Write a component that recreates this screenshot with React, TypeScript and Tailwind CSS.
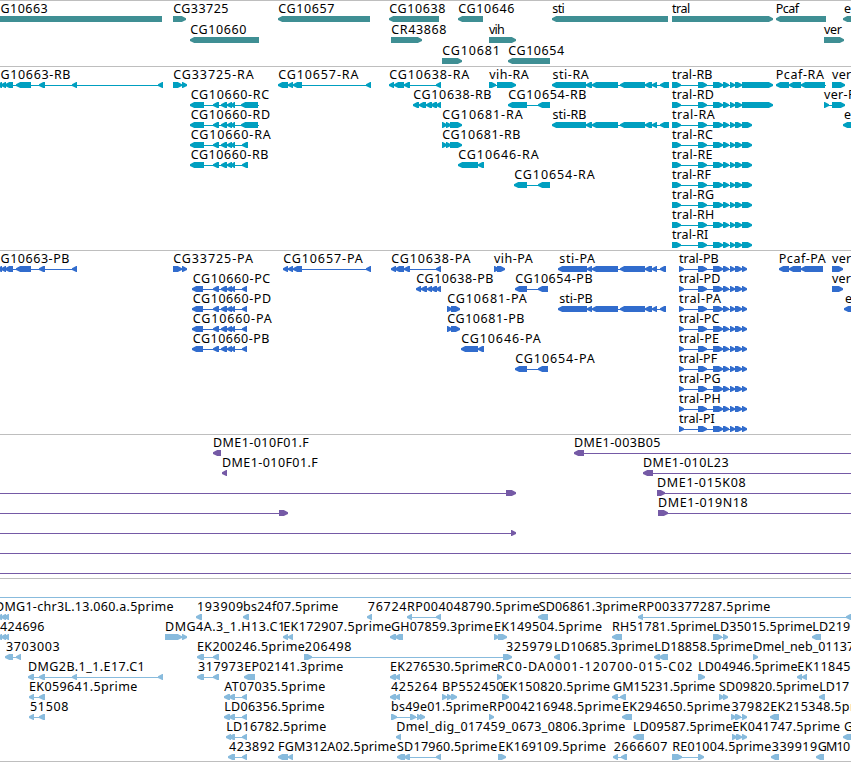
type Span = [number, number];
type Feature = {
  dir: 'L' | 'R';
  exons: Span[];
  line?: Span;
  label?: string;
  ink?: Span;
};
type TrackData = { color: string; rowClass: string; padClass: string; rows: Feature[][] };

const f = (
  dir: 'L' | 'R',
  label: string,
  inkStart: number,
  inkEnd: number,
  exons: Span[],
  line?: Span,
): Feature => ({ dir, label, ink: [inkStart, inkEnd], exons, line });

const bare = (dir: 'L' | 'R', exons: Span[], line: Span): Feature => ({ dir, exons, line });

const FONT = '12.5px "Noto Sans", "DejaVu Sans", sans-serif';
const measurer = document.createElement('canvas').getContext('2d')!;

function fitLabel(text: string, [start, end]: Span) {
  measurer.font = FONT;
  const m = measurer.measureText(text);
  const bearing = -m.actualBoundingBoxLeft;
  const inkWidth = m.actualBoundingBoxRight + m.actualBoundingBoxLeft;
  const gaps = text.length - 1;
  return {
    left: start - bearing,
    letterSpacing: gaps > 0 ? (end - start - inkWidth) / gaps : 0,
  };
}

const g663: Span[] = [[-3, 2], [1, 6], [5, 13], [16, 31], [39, 45], [72, 77]];
const g660: Span[] = [[213, 219], [221, 227], [227, 232], [231, 235]];
const stiR: Span[] = [[552, 586], [586, 592], [592, 618], [620, 645], [645, 652], [652, 657], [660, 669]];
const stiP: Span[] = [[558, 587], [587, 592], [592, 618], [620, 645], [645, 652], [652, 657], [660, 666]];
const tralMid: Span[] = [[698, 707], [713, 723], [723, 729], [730, 735], [735, 742]];
const tralR = (s: string, end: number, long = false) =>
  f('R', `tral-R${s}`, 672, end, [[672, 681], ...tralMid, [742, long ? 773 : 752]]);
const tralP = (s: string, end: number) =>
  f('R', `tral-P${s}`, 679, end, [[679, 684], ...tralMid, [742, 747]]);
const rna660 = (s: string, end: number, long: boolean) =>
  f('L', `CG10660-R${s}`, 190.7, end, [[190, 204], ...g660, long ? [241, 258] : [242, 248]], [190, long ? 259 : 248]);
const cds660 = (s: string, end: number) =>
  f('L', `CG10660-P${s}`, 192.8, end, [[192, 203], ...g660, [242, 247]]);

const genes: TrackData = {
  color: '#3f8f94',
  rowClass: 'h-[21px]',
  padClass: 'pb-[3px]',
  rows: [
    [
      f('L', 'G10663', 0.5, 47.5, [[-8, 162]]),
      f('R', 'CG33725', 173.2, 228.3, [[173, 186]]),
      f('L', 'CG10657', 278.2, 334.3, [[278, 370]]),
      f('L', 'CG10638', 389.3, 445.3, [[389, 439]]),
      f('L', 'CG10646', 458.3, 514.3, [[458, 483]]),
      f('L', 'sti', 552.3, 564.5, [[552, 668]]),
      f('R', 'tral', 672, 690, [[672, 773]]),
      f('L', 'Pcaf', 776.7, 799.7, [[776, 826]]),
      f('L', 'e', 844, 850, [[843, 860]]),
    ],
    [
      f('L', 'CG10660', 190.2, 246.3, [[190, 259]]),
      f('R', 'CR43868', 391.3, 446.3, [[391, 422]]),
      f('R', 'vih', 489, 504, [[489, 516]]),
      f('R', 'ver', 824, 841.7, [[824, 844]]),
    ],
    [
      f('R', 'CG10681', 442.3, 497.7, [[442, 462]]),
      f('L', 'CG10654', 508.3, 564, [[508, 550]]),
    ],
  ],
};

const transcripts: TrackData = {
  color: '#009fc0',
  rowClass: 'h-5',
  padClass: 'pb-1',
  rows: [
    [
      f('L', 'G10663-RB', 0.5, 70.3, [...g663, [158, 163]]),
      f('R', 'CG33725-RA', 173.2, 253.8, [[173, 182], [182, 187]]),
      f('L', 'CG10657-RA', 278.2, 358.5, [[278, 288], [288, 293], [293, 302], [366, 371]]),
      f('L', 'CG10638-RA', 389.3, 469.3, [[389, 394], [394, 404], [404, 410], [436, 441]]),
      f('R', 'vih-RA', 489.2, 528.7, [[489, 496], [497, 516]]),
      f('L', 'sti-RA', 552.5, 588.7, stiR),
      tralR('B', 712.3, true),
      f('L', 'Pcaf-RA', 776.7, 824, [[776, 789], [789, 801], [801, 825]], [776, 826]),
      f('R', 'ver-RA', 832, 872, [[832, 845]]),
    ],
    [
      rna660('C', 269.3, true),
      f('L', 'CG10638-RB', 413.3, 491.3, [[413, 419], [419, 426], [426, 432], [431, 437], [436, 441]]),
      f('L', 'CG10654-RB', 508.3, 586.3, [[508, 527], [538, 550]]),
      tralR('D', 713.8, true),
      f('R', 'ver-RB', 824, 864, [[824, 829], [832, 845]]),
    ],
    [
      rna660('D', 270, true),
      f('R', 'CG10681-RA', 442.3, 522.7, [[442, 447], [446, 451], [450, 462]]),
      f('L', 'sti-RB', 552.5, 586.3, stiR),
      tralR('A', 714.7),
      f('L', 'e', 844, 850, [[843, 860]]),
    ],
    [
      rna660('A', 270.8, false),
      f('R', 'CG10681-RB', 442.3, 520.3, [[442, 447], [446, 451], [450, 462]]),
      tralR('C', 713),
    ],
    [
      rna660('B', 268.3, false),
      f('L', 'CG10646-RA', 458.3, 538.7, [[458, 478], [478, 484]]),
      tralR('E', 712.5),
    ],
    [f('L', 'CG10654-RA', 514.3, 594.8, [[514, 527], [538, 550]]), tralR('F', 711.5)],
    [tralR('G', 714)],
    [tralR('H', 714)],
    [tralR('I', 708)],
  ],
};

const proteins: TrackData = {
  color: '#316ccd',
  rowClass: 'h-5',
  padClass: 'pb-1',
  rows: [
    [
      f('L', 'G10663-PB', 0.5, 69.3, g663),
      f('R', 'CG33725-PA', 173.2, 253, [[173, 182], [182, 187]]),
      f('L', 'CG10657-PA', 283.3, 362.7, [[283, 288], [288, 293], [293, 302], [366, 371]]),
      f('L', 'CG10638-PA', 391.3, 470.5, [[391, 396], [395, 404], [404, 410], [436, 441]]),
      f('R', 'vih-PA', 494, 532.7, [[494, 499], [497, 505]]),
      f('L', 'sti-PA', 559.3, 595, stiP),
      tralP('B', 718.5),
      f('L', 'Pcaf-PA', 779.8, 825.7, [[779, 789], [789, 801], [801, 823]]),
      f('R', 'ver-PA', 832, 871, [[832, 843]]),
    ],
    [
      cds660('C', 270.3),
      f('L', 'CG10638-PB', 416.3, 493.3, [[416, 421], [421, 427], [427, 432], [431, 437], [436, 441]]),
      f('L', 'CG10654-PB', 515.3, 592.5, [[515, 527], [538, 548]]),
      tralP('D', 720.3),
      f('R', 'ver-PB', 832, 871, [[832, 843]]),
    ],
    [
      cds660('D', 271),
      f('R', 'CG10681-PA', 447.3, 526.7, [[447, 452], [451, 460]]),
      f('L', 'sti-PB', 559.3, 592.5, stiP),
      tralP('A', 721),
      f('L', 'e', 845, 851, [[844, 860]]),
    ],
    [
      cds660('A', 271.7),
      f('R', 'CG10681-PB', 447.3, 524.3, [[447, 452], [451, 460]]),
      tralP('C', 719.5),
    ],
    [
      cds660('B', 269.3),
      f('L', 'CG10646-PA', 461.3, 540.7, [[461, 478], [478, 484]]),
      tralP('E', 719),
    ],
    [f('L', 'CG10654-PA', 515.3, 594.8, [[515, 527], [538, 548]]), tralP('F', 717.7)],
    [tralP('G', 720.5)],
    [tralP('H', 720.5)],
    [tralP('I', 714.5)],
  ],
};

const bacs: TrackData = {
  color: '#755aa6',
  rowClass: 'h-5',
  padClass: 'pb-1',
  rows: [
    [
      f('L', 'DME1-010F01.F', 214, 309.3, [[213, 221]]),
      f('L', 'DME1-003B05', 575, 660.3, [[574, 584]], [574, 851]),
    ],
    [
      f('L', 'DME1-010F01.F', 223, 318.3, [[222, 227]]),
      f('L', 'DME1-010L23', 644, 728.5, [[643, 653]], [643, 851]),
    ],
    [
      bare('R', [[506, 516]], [0, 516]),
      f('R', 'DME1-015K08', 658, 745.5, [[657, 665]], [657, 851]),
    ],
    [
      bare('R', [[279, 288]], [0, 288]),
      f('R', 'DME1-019N18', 659, 747.5, [[658, 668]], [658, 851]),
    ],
    [bare('R', [[511, 516]], [0, 516])],
    [bare('R', [], [0, 851])],
    [bare('R', [], [0, 851])],
  ],
};

const trio: Span[] = [[-3, 2], [1, 6], [4, 9]];
const ests: TrackData = {
  color: '#88bbdd',
  rowClass: 'h-5',
  padClass: 'pb-[3px]',
  rows: [
    [bare('R', [], [0, 851])],
    [
      f('L', 'DMG1-chr3L.13.060.a.5prime', -4, 173.5, trio),
      f('L', '193909', 198, 243, [[196, 202]]),
      f('L', 'bs24f07.5prime', 244, 338.3, [[243, 249]]),
      f('L', '76724', 367.8, 406.3, [[367, 372]]),
      f('L', 'RP004048790.5prime', 408, 539.5, [[407, 412], [436, 441]]),
      f('L', 'SD06861.3prime', 538.7, 638, [[538, 548]]),
      f('L', 'RP003377287.5prime', 639.3, 770.3, [[638, 643], [846, 853]]),
    ],
    [
      f('L', '424696', 0, 44.3, trio),
      f('R', 'DMG4A.3_1.H13.C1', 166, 283, [[165, 182], [182, 187]]),
      f('L', 'EK172907.5prime', 284.3, 391.3, [[283, 288], [288, 293]]),
      f('L', 'GH07859.3prime', 391, 493, [[390, 396], [395, 403]]),
      f('R', 'EK149504.5prime', 495, 602, [[494, 499], [498, 507]]),
      f('L', 'RH51781.5prime', 613, 713.8, [[612, 622]]),
      f('R', 'LD35015.5prime', 714.3, 812.5, [[713, 722], [723, 728]]),
      f('L', 'LD219', 813.3, 850, [[812, 821]]),
    ],
    [
      f('L', '3703003', 6, 59.5, [[5, 13], [16, 21]]),
      f('L', 'EK200246.5prime', 198, 304.7, [[197, 204], [213, 219]]),
      f('R', '206498', 304.8, 351.3, [[304, 312], [503, 512]]),
      f('L', '325979', 506, 552.3, []),
      f('L', 'LD10685.3prime', 555, 654, [[554, 560]]),
      f('L', 'LD18858.5prime', 655.3, 752.8, [[654, 660], [659, 668]]),
      f('R', 'Dmel_neb_01137', 754.3, 854, [[753, 758]]),
    ],
    [
      f('L', 'DMG2B.1_1.E17.C1', 29, 142.5, [[28, 34], [39, 45], [72, 77], [158, 163]]),
      f('L', '317973', 198, 243.5, [[197, 204], [213, 219]]),
      f('L', 'EP02141.3prime', 245.3, 343.3, [[244, 255]]),
      f('L', 'EK276530.5prime', 391, 498, [[390, 396], [395, 400]]),
      f('R', 'RC0-DA0001-120700-015-C02', 498, 692.3, [[497, 502]]),
      f('R', 'LD04946.5prime', 699, 797.5, [[698, 705]]),
      f('L', 'EK11845', 798.3, 850.3, [[797, 802], [802, 807]]),
    ],
    [
      f('L', 'EK059641.5prime', 30, 137.3, [[29, 34], [39, 45]]),
      f('L', 'AT07035.5prime', 224.3, 325.3, [[224, 230], [229, 235], [242, 247]]),
      f('L', '425264', 391, 437.3, [[390, 396], [395, 400]]),
      f('R', 'BP552450', 443, 503.3, [[442, 447], [447, 452], [451, 457]]),
      f('R', 'EK150820.5prime', 503.3, 610, [[502, 509]]),
      f('L', 'GM15231.5prime', 613, 715.3, [[612, 618], [620, 626]]),
      f('R', 'SD09820.5prime', 719, 819, [[719, 724], [723, 728]]),
      f('L', 'LD17', 820.3, 849, [[819, 825]]),
    ],
    [
      f('L', '51508', 30, 68.3, [[29, 34], [39, 45]]),
      f('L', 'LD06356.5prime', 225.3, 324.5, [[224, 230], [229, 235], [242, 247]]),
      f('R', 'bs49e01.5prime', 392, 488.7, [[391, 397], [410, 416], [417, 422], [420, 425]]),
      f('R', 'RP004216948.5prime', 490, 621, [[489, 494]]),
      f('L', 'EK294650.5prime', 623, 730.3, [[622, 632]]),
      f('R', '37982', 731.5, 769.7, [[731, 736], [735, 741], [742, 747]]),
      f('L', 'EK215348.5prime', 771.3, 878, [[770, 779]]),
    ],
    [
      f('L', 'LD16782.5prime', 227.3, 326.3, [[226, 231], [229, 235], [242, 247]]),
      f('L', 'Dmel_dig_017459_0673_0806.3prime', 397.3, 625.3, [[396, 401]]),
      f('L', 'LD09587.5prime', 634, 732.5, [[633, 644]]),
      f('R', 'EK041747.5prime', 733.3, 840, [[732, 737], [736, 742], [742, 747]]),
      f('L', 'G', 844, 852, [[843, 856]]),
    ],
    [
      f('L', '423892', 229, 274.5, [[228, 235], [242, 247]]),
      f('L', 'FGM312A02.5prime', 279, 396.3, [[278, 288], [288, 293]]),
      f('L', 'SD17960.5prime', 397, 497.3, [[397, 405], [404, 410], [436, 441]]),
      f('R', 'EK169109.5prime', 499.3, 606, [[498, 506]]),
      f('L', '2666607', 613.8, 667.3, [[613, 618], [621, 627]]),
      f('R', 'RE01004.5prime', 673.3, 771.3, [[672, 682], [698, 704]]),
      f('L', '339919', 771.8, 817, [[771, 779]]),
      f('L', 'GM10', 817.7, 850, [[816, 824]]),
    ],
  ],
};

const tracks = [genes, transcripts, proteins, bacs, ests];

/* A block arrow with a blunt tip; spans too short for a body are all head. */
function exonPoints([a, b]: Span, dir: 'L' | 'R') {
  const head = Math.min(5, b - a);
  return dir === 'L'
    ? `${a},20 ${a},18.2 ${a + head - 0.8},16 ${b},16 ${b},22 ${a + head - 0.8},22`
    : `${b},20 ${b},18.2 ${b - head + 0.8},16 ${a},16 ${a},22 ${b - head + 0.8},22`;
}

function Glyph({ feature, color }: { feature: Feature; color: string }) {
  const { exons, dir } = feature;
  const line: Span | null =
    feature.line ?? (exons.length > 1 ? [exons[0][0], exons[exons.length - 1][1]] : null);
  return (
    <g fill={color}>
      {line && <rect x={line[0]} y={19} width={line[1] - line[0]} height={1} />}
      {exons.map((e, i) => (
        <polygon key={i} points={exonPoints(e, dir)} />
      ))}
    </g>
  );
}

function Row({ features, color, rowClass }: { features: Feature[]; color: string; rowClass: string }) {
  return (
    <div className={`relative w-full ${rowClass}`}>
      <svg className="block overflow-visible" width={851} height={22}>
        {features.map((feature, i) => (
          <Glyph key={i} feature={feature} color={color} />
        ))}
      </svg>
      {features.map((feature, i) =>
        feature.label && feature.ink ? (
          <span
            key={i}
            className="absolute top-0 whitespace-pre font-['Noto_Sans','DejaVu_Sans',sans-serif] text-[12.5px] leading-[17px] text-black"
            style={fitLabel(feature.label, feature.ink)}
          >
            {feature.label}
          </span>
        ) : null,
      )}
    </div>
  );
}

export default function App() {
  return (
    <main className="flex h-[762px] w-[851px] flex-col overflow-hidden bg-white">
      {tracks.map((track, i) => (
        <section key={i} className={`relative shrink-0 ${track.padClass}`}>
          <div className="h-px w-full bg-[#bebebe]" />
          <div className="-mt-px flex flex-col">
            {track.rows.map((row, j) => (
              <Row key={j} features={row} color={track.color} rowClass={track.rowClass} />
            ))}
          </div>
        </section>
      ))}
      <div className="h-px w-full shrink-0 bg-[#bebebe]" />
    </main>
  );
}
